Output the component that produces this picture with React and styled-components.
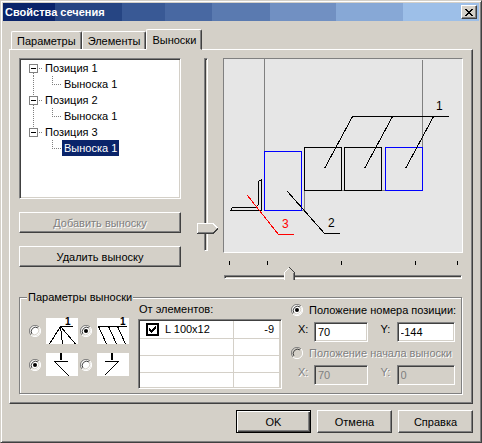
import { useState } from "react";
import styled, { createGlobalStyle, css } from "styled-components";

const face = "#d4d0c8";
const shadow = "#808080";
const dark = "#404040";
const navy = "#0a246a";

const svgUrl = (w, h, body) =>
  `url("data:image/svg+xml,${encodeURIComponent(
    `<svg xmlns="http://www.w3.org/2000/svg" width="${w}" height="${h}" viewBox="0 0 ${w} ${h}">${body}</svg>`
  )}")`;

const radioIcon = (fill, dot) =>
  svgUrl(
    12,
    12,
    `<circle cx="6" cy="6" r="5" fill="${fill}"/>
    <path d="M2 10A5.5 5.5 0 0 1 10 2" fill="none" stroke="${shadow}"/>
    <path d="M3 9A4.3 4.3 0 0 1 9 3" fill="none" stroke="${dark}"/>
    <path d="M10 2A5.5 5.5 0 0 1 2 10" fill="none" stroke="#fff"/>
    <path d="M9 3A4.3 4.3 0 0 1 3 9" fill="none" stroke="${face}"/>
    ${dot ? '<circle cx="6" cy="6" r="2" fill="#000"/>' : ""}`
  );

const checkIcon = svgUrl(
  9,
  9,
  '<path d="M1 3v3l2 2 5-5V0L3 5z" fill="#000" shape-rendering="crispEdges"/>'
);

const thumbDown = svgUrl(
  11,
  13,
  `<g shape-rendering="crispEdges"><path d="M0 13V5l5-5h1l5 5v8z" fill="${face}"/>
  <path d="M.5 13V5.500L5.500 .5" fill="none" stroke="#fff"/>
  <path d="M5.500 .5l5 5V13" fill="none" stroke="${dark}"/>
  <path d="M9.500 6V13" stroke="${shadow}"/></g>`
);

const thumbRight = svgUrl(
  22,
  11,
  `<g shape-rendering="crispEdges"><path d="M0 0h16l5 5v1l-5 5H0z" fill="${face}"/>
  <path d="M.5 10V.5H16L21 5.500" fill="none" stroke="#fff"/>
  <path d="M1 9.500H15.500" stroke="${shadow}"/>
  <path d="M0 10.500H16L21 5.500" fill="none" stroke="${dark}"/></g>`
);

const GlobalStyle = createGlobalStyle`
  * {
    box-sizing: border-box;
  }

  body {
    margin: 0;
    background: ${face};
    color: #000;
    font: 11px/14px "Liberation Sans", Arial, sans-serif;
  }

  button, input {
    font: inherit;
    color: inherit;
    margin: 0;
  }
`;

const raised = css`
  background: ${face};
  border: 1px solid;
  border-color: #fff ${dark} ${dark} #fff;
  box-shadow: inset -1px -1px ${shadow};
`;

const sunken = css`
  border: 1px solid;
  border-color: ${shadow} #fff #fff ${shadow};
  box-shadow: inset 1px 1px ${dark}, inset -1px -1px ${face};
`;

const etched = css`
  color: ${shadow};
  text-shadow: 1px 1px #fff;
`;

const Dialog = styled.div`
  background: ${face};
  border: 1px solid;
  border-color: ${face} ${dark} ${dark} ${face};
  box-shadow: inset 1px 1px #fff, inset -1px -1px ${shadow};
  padding: 2px;
`;

const TitleBar = styled.header`
  display: flex;
  align-items: center;
  justify-content: space-between;
  height: 18px;
  padding: 0 2px;
  background: linear-gradient(
    90deg,
    #0a246a 11%,
    #264583 11% 25%,
    #395995 25% 34%,
    #4868a2 34% 44%,
    #5a7ab0 44% 56%,
    #7190c2 56% 70%,
    #87a8d6 70% 84%,
    #9dbfe8 84%
  );
`;

const Title = styled.h1`
  margin: 0;
  color: #fff;
  font: bold 11px/16px "Liberation Sans", Arial, sans-serif;
`;

const CloseButton = styled.button`
  ${raised}
  display: flex;
  align-items: center;
  justify-content: center;
  width: 16px;
  height: 14px;
  padding: 0;
`;

const Body = styled.main`
  padding: 8px 6px 7px;
`;

const TabList = styled.div`
  display: flex;
  align-items: flex-end;
  padding-left: 2px;
`;

const Tab = styled.button`
  position: relative;
  height: ${(p) => (p.$active ? 21 : 18)}px;
  margin-bottom: ${(p) => (p.$active ? -1 : 0)}px;
  padding: 0 5px;
  background: ${face};
  border: 1px solid;
  border-color: #fff ${dark} ${face} #fff;
  border-bottom-width: ${(p) => (p.$active ? 1 : 0)}px;
  border-radius: 2px 2px 0 0;
  box-shadow: inset -1px 0 ${shadow};
  z-index: ${(p) => (p.$active ? 1 : 0)};
`;

const Page = styled.section`
  ${raised}
  padding: 8px 9px;
`;

const Upper = styled.div`
  display: flex;
  align-items: flex-start;
`;

const Side = styled.div`
  display: flex;
  flex-direction: column;
  flex: none;
  gap: 13px;
  width: 162px;
`;

const Tree = styled.ul`
  ${sunken}
  height: 141px;
  margin: 0;
  padding: 1px;
  background: #fff;
  list-style: none;
`;

const Branch = styled.ul`
  margin: 0;
  padding: 0;
  list-style: none;
`;

const TreeRow = styled.div`
  display: flex;
  height: 16px;
`;

const Toggle = styled.button`
  display: flex;
  padding: 0;
  border: 0;
  background: none;
`;

const TreeLabel = styled.button`
  padding: 0 2px;
  border: 0;
  line-height: 16px;
  background: ${(p) => (p.$selected ? navy : "none")};
  color: ${(p) => (p.$selected ? "#fff" : "#000")};
`;

const PushButton = styled.button`
  ${raised}
  height: ${(p) => p.$height || 21}px;
  padding: 0;
  line-height: 14px;
  &:disabled {
    ${etched}
  }
`;

const VerticalSlider = styled.input`
  appearance: none;
  writing-mode: vertical-lr;
  flex: none;
  width: 22px;
  height: 193px;
  margin: 0 4px 0 16px;
  background: none;

  &::-webkit-slider-runnable-track {
    ${sunken}
    width: 4px;
    margin-right: 4px;
    background: ${dark};
  }

  &::-webkit-slider-thumb {
    appearance: none;
    width: 22px;
    height: 11px;
    margin-left: -8px;
    background: ${thumbRight};
  }
`;

const Preview = styled.div`
  flex: 1;
  min-width: 0;
`;

const Canvas = styled.div`
  display: flex;
  background: #e6e6e6;
  border: 1px solid;
  border-color: ${shadow} #fff #fff ${shadow};

  svg {
    width: 100%;
    height: 193px;
  }
`;

const Ticks = styled.div`
  display: grid;
  grid-template-columns: 38fr 74fr 73fr 42fr 1px;
  height: 4px;
  margin: 8px 5px 1px 6px;
`;

const Tick = styled.span`
  width: 1px;
  background: #000;
`;

const HorizontalSlider = styled.input`
  appearance: none;
  display: block;
  width: calc(100% - 2px);
  height: 13px;
  margin-left: 1px;
  background: none;

  &::-webkit-slider-runnable-track {
    ${sunken}
    height: 4px;
    margin-top: 8px;
    background: ${dark};
  }

  &::-webkit-slider-thumb {
    appearance: none;
    width: 11px;
    height: 13px;
    margin-top: -9px;
    background: ${thumbDown};
  }
`;

const Group = styled.fieldset`
  display: flex;
  gap: 9px;
  min-width: 0;
  margin: 12px 1px 1px 0;
  padding: 0 6px 4px 9px;
  border: 1px solid ${shadow};
  box-shadow: 1px 1px #fff, inset 1px 1px #fff;
`;

const Legend = styled.legend`
  margin-left: -2px;
  padding: 0 1px;
  background: ${face};
  line-height: 12px;
`;

const StyleGrid = styled.div`
  display: grid;
  flex: none;
  grid-template-columns: auto auto;
  align-content: start;
  gap: 9px 2px;
  padding-top: 15px;
`;

const StyleOption = styled.label`
  display: flex;
  align-items: center;
  gap: 5px;

  svg {
    background: #fff;
    overflow: visible;
  }
`;

const Radio = styled.input`
  appearance: none;
  flex: none;
  width: 12px;
  height: 12px;
  background: ${radioIcon("#fff", false)};
  &:checked {
    background: ${radioIcon("#fff", true)};
  }
  &:disabled {
    background: ${radioIcon(face, false)};
  }
`;

const Elements = styled.div`
  flex: none;
  width: 144px;
`;

const ElementsTitle = styled.div`
  height: 16px;
  padding-left: 1px;
  line-height: 12px;
`;

const TableFrame = styled.div`
  ${sunken}
  padding: 1px;
  background: #fff;
`;

const Table = styled.table`
  width: 100%;
  border-collapse: collapse;
  table-layout: fixed;
`;

const Cell = styled.td`
  width: ${(p) => p.$width || "auto"};
  height: 17px;
  padding: 0 5px 0 6px;
  text-align: ${(p) => p.$align || "left"};
  border-right: 1px solid ${face};
  border-bottom: 1px solid ${face};
  tr:last-child & {
    height: 15px;
    border-bottom: 0;
  }
`;

const CheckLabel = styled.label`
  display: flex;
  align-items: center;
  gap: 6px;
`;

const Checkbox = styled.input`
  appearance: none;
  width: 13px;
  height: 13px;
  border: 2px solid #000;
  &:checked {
    background: ${checkIcon} center no-repeat;
  }
`;

const Placement = styled.div`
  display: flex;
  flex-direction: column;
  flex: 1;
  gap: 4px;
  min-width: 0;
`;

const PlacementLabel = styled.label`
  display: flex;
  align-items: center;
  gap: 6px;
  white-space: nowrap;
  ${(p) => p.$disabled && etched}
`;

const Fields = styled.div`
  display: grid;
  grid-template-columns: 70fr 75fr;
  gap: 13px;
  padding: 5px 0 0 7px;
  ${(p) => p.$disabled && etched}
`;

const Field = styled.div`
  display: grid;
  grid-template-columns: 16px 1fr;
`;

const NumberBox = styled.input`
  ${sunken}
  min-width: 0;
  width: 100%;
  height: 20px;
  padding: 0 3px;
  background: #fff;
  &:disabled {
    background: ${face};
    color: ${shadow};
  }
`;

const Footer = styled.footer`
  display: flex;
  justify-content: flex-end;
  gap: 6px;
  padding-top: 6px;
`;

const FooterButton = styled(PushButton).attrs({ $height: 23 })`
  width: 75px;
  ${(p) =>
    p.$default &&
    css`
      border-color: #000;
      box-shadow: inset 1px 1px #fff, inset -1px -1px ${dark}, inset -2px -2px ${shadow};
    `}
`;

const positions = ["Позиция 1", "Позиция 2", "Позиция 3"];
const rows = [{ name: "L 100x12", value: "-9" }, null, null, null];

const dotted = { stroke: shadow, strokeDasharray: "1 1", fill: "none" };

const ToggleIcon = ({ first, last }) => (
  <svg width="22" height="16" shapeRendering="crispEdges">
    {!first && <path d="M12.500 0V4" {...dotted} />}
    {!last && <path d="M12.500 13V16" {...dotted} />}
    <path d="M18 8.500H21" {...dotted} />
    <rect x="8.500" y="4.500" width="8" height="8" fill="#fff" stroke={shadow} />
    <path d="M10 8.500H15" stroke="#000" />
  </svg>
);

const ChildGuide = ({ last }) => (
  <svg width="41" height="16" shapeRendering="crispEdges">
    {!last && <path d="M12.500 0V16" {...dotted} />}
    <path d="M31.500 0V8.500H41" {...dotted} />
  </svg>
);

const Drawing = () => (
  <svg viewBox="0 0 238 193" fill="none" stroke="#000" shapeRendering="crispEdges">
    <path d="M40.500 0V92M198.500 1V88M80.500 131V151.500H78M80 131.500H161" stroke={shadow} />
    <rect x="40.500" y="92.500" width="37" height="59" stroke="#00f" />
    <rect x="80.500" y="88.500" width="37" height="43" />
    <rect x="120.500" y="88.500" width="37" height="43" />
    <rect x="161.500" y="88.500" width="37" height="43" stroke="#00f" />
    <path d="M100.500 109.500L128.500 57.500H225M168.500 57.500L140.500 109.500M209.500 57.500L181.500 109.500" />
    <path d="M37.500 151.500H6.500L8.500 148.500H31.500L34.500 145.500V122.500L37.500 120.500Z" />
    <path d="M63.500 132.500L100.500 174.500H116" />
    <path d="M23.500 136.500L54.500 175.500H70" stroke="#f00" />
    <g stroke="none" fontSize="12">
      <text x="212" y="51" fill="#000">1</text>
      <text x="104" y="168" fill="#000">2</text>
      <text x="58" y="169" fill="#f00">3</text>
    </g>
  </svg>
);

const FanIcon = () => (
  <svg width="32" height="26" stroke="#000" fill="none" shapeRendering="crispEdges">
    <path d="M14 8.500H27M14.500 8.500L3.500 26M14.500 8.500L16.500 26M14.500 8.500L29.500 26" />
    <text x="19" y="7" fontSize="10" fontWeight="bold" fill="#000" stroke="none">1</text>
  </svg>
);

const ParallelIcon = () => (
  <svg width="32" height="26" stroke="#000" fill="none" shapeRendering="crispEdges">
    <path d="M1 8.500H30M1.500 8.500L9.500 26M11.500 8.500L19.500 26M20.500 8.500L28.500 26" />
    <text x="23" y="7" fontSize="10" fontWeight="bold" fill="#000" stroke="none">1</text>
  </svg>
);

const RightIcon = () => (
  <svg width="32" height="23" stroke="#000" fill="none" shapeRendering="crispEdges">
    <path d="M8 8.500H22M9.500 9.500L23 23" />
    <path d="M15 0V7" strokeWidth="2" />
  </svg>
);

const LeftIcon = () => (
  <svg width="32" height="23" stroke="#000" fill="none" shapeRendering="crispEdges">
    <path d="M8 8.500H22M21.500 8.500L8 22" />
    <path d="M15 0V7" strokeWidth="2" />
  </svg>
);

const Coordinates = ({ id, x, y, disabled }) => (
  <Fields $disabled={disabled}>
    <Field>
      <label htmlFor={`${id}-x`}>X:</label>
      <NumberBox id={`${id}-x`} defaultValue={x} disabled={disabled} />
    </Field>
    <Field>
      <label htmlFor={`${id}-y`}>Y:</label>
      <NumberBox id={`${id}-y`} defaultValue={y} disabled={disabled} />
    </Field>
  </Fields>
);

const App = () => {
  const [selected, setSelected] = useState(2);

  return (
    <>
      <GlobalStyle />
      <Dialog role="dialog" aria-labelledby="title">
        <TitleBar>
          <Title id="title">Свойства сечения</Title>
          <CloseButton aria-label="Закрыть">
            <svg width="8" height="7" shapeRendering="crispEdges">
              <path
                d="M0 0h2v1h1v1h2V1h1V0h2v1H7v1H6v1H5v1h1v1h1v1h1v1H6V6H5V5H3v1H2v1H0V6h1V5h1V4h1V3H2V2H1V1H0z"
                fill="#000"
              />
            </svg>
          </CloseButton>
        </TitleBar>
        <Body>
          <TabList role="tablist">
            <Tab role="tab">Параметры</Tab>
            <Tab role="tab">Элементы</Tab>
            <Tab role="tab" aria-selected="true" $active>
              Выноски
            </Tab>
          </TabList>
          <Page>
            <Upper>
              <Side>
                <Tree>
                  {positions.map((name, i) => {
                    const last = i === positions.length - 1;
                    return (
                      <li key={name}>
                        <TreeRow>
                          <Toggle aria-label={name}>
                            <ToggleIcon first={i === 0} last={last} />
                          </Toggle>
                          <TreeLabel>{name}</TreeLabel>
                        </TreeRow>
                        <Branch>
                          <li>
                            <TreeRow>
                              <ChildGuide last={last} />
                              <TreeLabel $selected={selected === i} onClick={() => setSelected(i)}>
                                Выноска 1
                              </TreeLabel>
                            </TreeRow>
                          </li>
                        </Branch>
                      </li>
                    );
                  })}
                </Tree>
                <PushButton disabled>Добавить выноску</PushButton>
                <PushButton>Удалить выноску</PushButton>
              </Side>
              <VerticalSlider type="range" aria-label="По вертикали" defaultValue={91} />
              <Preview>
                <Canvas>
                  <Drawing />
                </Canvas>
                <Ticks>
                  <Tick />
                  <Tick />
                  <Tick />
                  <Tick />
                  <Tick />
                </Ticks>
                <HorizontalSlider type="range" aria-label="По горизонтали" defaultValue={26} />
              </Preview>
            </Upper>
            <Group>
              <Legend>Параметры выноски</Legend>
              <StyleGrid>
                <StyleOption>
                  <Radio type="radio" name="lines" aria-label="Веер" />
                  <FanIcon />
                </StyleOption>
                <StyleOption>
                  <Radio type="radio" name="lines" aria-label="Параллельно" defaultChecked />
                  <ParallelIcon />
                </StyleOption>
                <StyleOption>
                  <Radio type="radio" name="side" aria-label="Вправо" defaultChecked />
                  <RightIcon />
                </StyleOption>
                <StyleOption>
                  <Radio type="radio" name="side" aria-label="Влево" />
                  <LeftIcon />
                </StyleOption>
              </StyleGrid>
              <Elements>
                <ElementsTitle id="elements">От элементов:</ElementsTitle>
                <TableFrame>
                  <Table aria-labelledby="elements">
                    <tbody>
                      {rows.map((row, i) => (
                        <tr key={i}>
                          <Cell $width="93px">
                            {row && (
                              <CheckLabel>
                                <Checkbox type="checkbox" defaultChecked />
                                {row.name}
                              </CheckLabel>
                            )}
                          </Cell>
                          <Cell $align="right">{row && row.value}</Cell>
                        </tr>
                      ))}
                    </tbody>
                  </Table>
                </TableFrame>
              </Elements>
              <Placement>
                <div>
                  <PlacementLabel>
                    <Radio type="radio" name="placement" defaultChecked />
                    Положение номера позиции:
                  </PlacementLabel>
                  <Coordinates id="number" x="70" y="-144" />
                </div>
                <div>
                  <PlacementLabel $disabled>
                    <Radio type="radio" name="placement" disabled />
                    Положение начала выноски
                  </PlacementLabel>
                  <Coordinates id="start" x="70" y="0" disabled />
                </div>
              </Placement>
            </Group>
          </Page>
          <Footer>
            <FooterButton $default>OK</FooterButton>
            <FooterButton>Отмена</FooterButton>
            <FooterButton>Справка</FooterButton>
          </Footer>
        </Body>
      </Dialog>
    </>
  );
};

export default App;
